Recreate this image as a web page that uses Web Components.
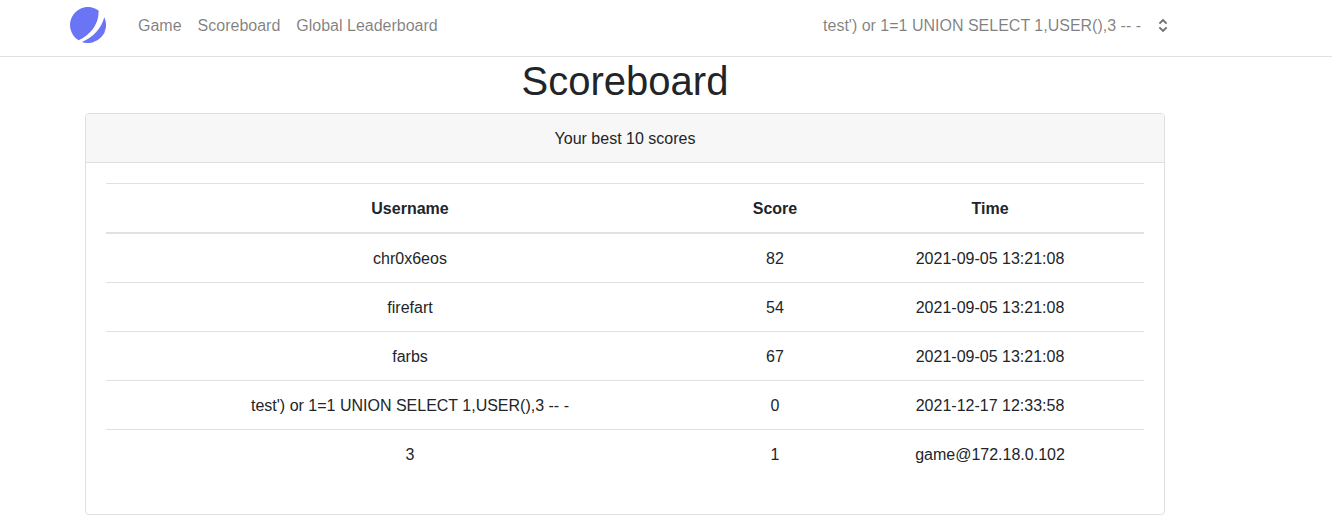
<!DOCTYPE html>
<html lang="en">
<head>
<meta charset="utf-8">
<title>Scoreboard</title>
<style>
body{margin:0;background:#fff;color:#212529;font:16px/24px "Liberation Sans",Arial,sans-serif}
</style>
</head>
<body>
<nav-bar>
  <nav-link>Game</nav-link>
  <nav-link>Scoreboard</nav-link>
  <nav-link>Global Leaderboard</nav-link>
  <user-menu slot="user">test') or 1=1 UNION SELECT 1,USER(),3 -- -</user-menu>
</nav-bar>
<page-main>
  <page-title>Scoreboard</page-title>
  <score-card>
    <span slot="header">Your best 10 scores</span>
    <score-table></score-table>
  </score-card>
</page-main>
<script>
const define = (name, html, init) => customElements.define(name, class extends HTMLElement {
  constructor() {
    super();
    const root = this.attachShadow({mode: 'open'});
    const t = document.createElement('template');
    t.innerHTML = html;
    root.append(t.content.cloneNode(true));
    if (init) init(root);
  }
});

define('brand-logo', `
<style>:host{display:block;width:36px;height:36px}svg{display:block}</style>
<svg width="36" height="36" viewBox="0 0 36 36" fill="#6975f5">
  <path d="M28.6 3.4A18 18 0 1 0 8.6 33.3C20 28 29.2 17.5 28.6 3.4Z"/>
  <path d="M34.3 10.3A18 18 0 0 1 12 35C23 30.5 31 22 34.3 10.3Z"/>
</svg>`);

define('nav-link', `
<style>:host{display:block;padding:2px 8px 0;color:rgba(0,0,0,.5);white-space:nowrap}</style>
<slot></slot>`);

define('user-menu', `
<style>
:host{display:flex;align-items:center;color:rgba(0,0,0,.5);white-space:nowrap}
.name{padding-top:2px}
svg{display:block;margin-left:16px}
</style>
<span class="name"><slot></slot></span>
<svg width="12" height="16" viewBox="0 0 12 16" fill="none" stroke="#707070" stroke-width="1.9"><path d="M2.4 6.7L6 3.1L9.6 6.7M2.4 10.3L6 13.9L9.6 10.3"/></svg>`);

define('nav-bar', `
<style>
:host{display:flex;box-sizing:border-box;height:57px;padding:0 163px 6px 70px;align-items:center;border-bottom:1px solid #dfdfdf}
.links{display:flex;margin-left:24px}
.user{margin-left:auto}
</style>
<brand-logo></brand-logo>
<div class="links"><slot></slot></div>
<div class="user"><slot name="user"></slot></div>`);

define('page-main', `
<style>:host{display:block;width:1080px;margin-left:85px}</style><slot></slot>`);

define('page-title', `
<style>:host{display:block}h1{margin:0 0 8px;font-weight:400;font-size:40px;line-height:48px;text-align:center}</style>
<h1><slot></slot></h1>`);

define('score-card', `
<style>
:host{display:block;border:1px solid #dfdfdf;border-radius:4px;background:#fff;text-align:center;overflow:hidden}
header{padding:13px 20px 11px;background:#f7f7f7;border-bottom:1px solid #dfdfdf}
.body{padding:20px}
</style>
<header><slot name="header"></slot></header>
<div class="body"><slot></slot></div>`);

define('score-table', `
<style>
:host{display:block;margin-bottom:16px}
table{width:100%;table-layout:fixed;border-spacing:0;text-align:center}
th,td{padding:13px 12px 11px;border-top:1px solid #dee2e6}
th{border-bottom:2px solid #dee2e6}
tbody tr:first-child td{border-top:0}
th:nth-child(1){width:584px}
th:nth-child(2){width:98px}
</style>
<table>
  <thead><tr><th>Username</th><th>Score</th><th>Time</th></tr></thead>
  <tbody></tbody>
</table>`, root => {
  const body = root.querySelector('tbody');
  for (const row of [
    ['chr0x6eos', '82', '2021-09-05 13:21:08'],
    ['firefart', '54', '2021-09-05 13:21:08'],
    ['farbs', '67', '2021-09-05 13:21:08'],
    ["test') or 1=1 UNION SELECT 1,USER(),3 -- -", '0', '2021-12-17 12:33:58'],
    ['3', '1', 'game@172.18.0.102']
  ]) {
    const tr = body.insertRow();
    for (const value of row) tr.insertCell().textContent = value;
  }
});
</script>
</body>
</html>
